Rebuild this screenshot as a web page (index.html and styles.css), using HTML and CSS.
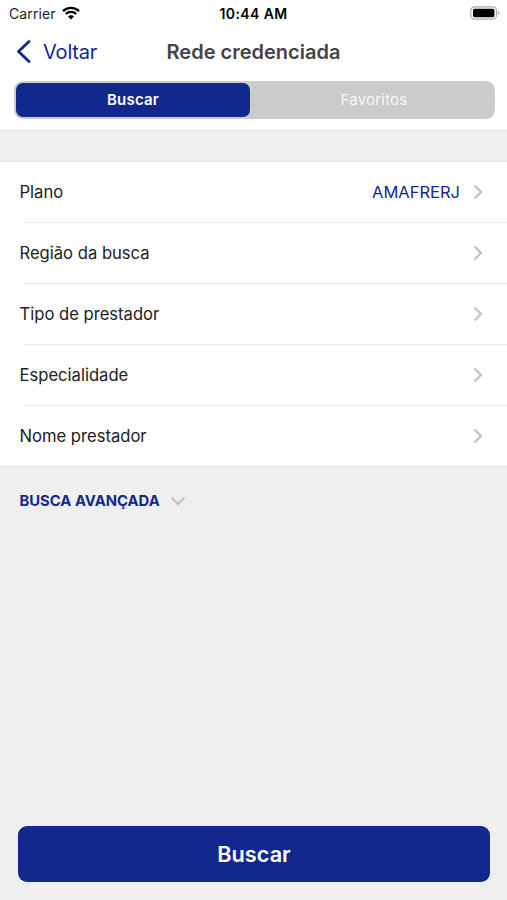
FILE: index.html
```html
<!DOCTYPE html>
<html lang="pt-BR">

<head>
    <meta charset="UTF-8">
    <meta name="viewport" content="width=device-width, initial-scale=1.0">
    <title>Rede credenciada</title>
    <link rel="stylesheet" href="styles.css">
</head>

<body>
    <div class="app">
        <header class="header">
            <div class="status">
                <div class="carrier">
                    <span>Carrier</span>
                    <svg class="wifi" width="18" height="14" viewBox="0 0 18 14">
                        <path d="M1 5.2a11.4 11.4 0 0 1 16 0" />
                        <path d="M3.8 8a7.4 7.4 0 0 1 10.4 0" />
                        <path class="dot" d="M9 13.6L6 10.6a4.2 4.2 0 0 1 6 0z" />
                    </svg>
                </div>
                <span class="time">10:44 AM</span>
                <div class="power">
                    <svg width="31" height="14" viewBox="0 0 31 14">
                        <rect class="case" x="1.8" y="0.8" width="25.6" height="12.4" rx="3.6" />
                        <rect x="4" y="2.8" width="21.4" height="8.4" rx="1.6" />
                        <path class="cap" d="M28.6 4.8q1.8.8 1.8 2.2t-1.8 2.2z" />
                    </svg>
                </div>
            </div>
            <nav class="nav">
                <a href="#" class="back">
                    <svg width="15" height="24" viewBox="0 0 15 24">
                        <path d="M13 1.5L2.5 11.5L13 21.5" />
                    </svg>
                    <span>Voltar</span>
                </a>
                <h1>Rede credenciada</h1>
            </nav>
            <div class="tabs">
                <a href="#" class="tab current">Buscar</a>
                <a href="#" class="tab">Favoritos</a>
            </div>
        </header>

        <ul class="list">
            <li>
                <span>Plano</span>
                <span class="value">AMAFRERJ</span>
                <svg class="arrow" width="10" height="16" viewBox="0 0 10 16"><path d="M1.5 1.5L8 8L1.5 14.5" /></svg>
            </li>
            <li>
                <span>Região da busca</span>
                <svg class="arrow" width="10" height="16" viewBox="0 0 10 16"><path d="M1.5 1.5L8 8L1.5 14.5" /></svg>
            </li>
            <li>
                <span>Tipo de prestador</span>
                <svg class="arrow" width="10" height="16" viewBox="0 0 10 16"><path d="M1.5 1.5L8 8L1.5 14.5" /></svg>
            </li>
            <li>
                <span>Especialidade</span>
                <svg class="arrow" width="10" height="16" viewBox="0 0 10 16"><path d="M1.5 1.5L8 8L1.5 14.5" /></svg>
            </li>
            <li>
                <span>Nome prestador</span>
                <svg class="arrow" width="10" height="16" viewBox="0 0 10 16"><path d="M1.5 1.5L8 8L1.5 14.5" /></svg>
            </li>
        </ul>

        <a href="#" class="advanced">
            <span>BUSCA AVANÇADA</span>
            <svg width="16" height="10" viewBox="0 0 16 10"><path d="M1.5 1.5L8 8L14.5 1.5" /></svg>
        </a>

        <button class="submit">Buscar</button>
    </div>
</body>

</html>
```
FILE: styles.css
```css
* {
    margin: 0;
    padding: 0;
    box-sizing: border-box;
}

body {
    font-family: Inter, "Liberation Sans", sans-serif;
    background-color: #efefef;
}

ul {
    list-style: none;
}

a {
    color: #12288c;
    text-decoration: none;
}

svg {
    display: block;
    flex: none;
}

.app {
    height: 900px;
    display: flex;
    flex-direction: column;
}

/* header */
.header {
    height: 131px;
    background-color: #fff;
    border-bottom: 1px solid #dedede;
}

.status {
    height: 26px;
    padding: 0 7px 0 9px;
    display: grid;
    grid-template-columns: 1fr auto 1fr;
    align-items: center;
    font-size: 14px;
    color: #222;
}

.carrier {
    display: flex;
    align-items: center;
    gap: 6px;
    letter-spacing: 0.1px;
}

.wifi path {
    fill: none;
    stroke: #000;
    stroke-width: 2.4;
}

.wifi .dot {
    fill: #000;
    stroke: none;
}

.time {
    margin-right: 2px;
    font-weight: 600;
    letter-spacing: 0.4px;
    color: #000;
}

.power {
    display: flex;
    justify-content: flex-end;
}

.case {
    fill: none;
    stroke: #aaa;
    stroke-width: 1.2;
}

.cap {
    fill: #aaa;
}

.nav {
    height: 52px;
    margin-bottom: 3px;
    padding: 0 16px;
    display: grid;
    grid-template-columns: 1fr auto 1fr;
    align-items: center;
}

.back {
    display: flex;
    align-items: center;
    gap: 12px;
    font-size: 20px;
    letter-spacing: -0.2px;
}

.back path {
    fill: none;
    stroke: #12288c;
    stroke-width: 2.8;
    stroke-linecap: round;
    stroke-linejoin: round;
}

.nav h1 {
    font-size: 20px;
    font-weight: 600;
    color: #444;
}

.tabs {
    height: 38px;
    margin: 0 12px 0 14px;
    padding: 2px;
    display: flex;
    background-color: #cbcbcb;
    border-radius: 9px;
}

.tab {
    flex: 1;
    padding-left: 5px;
    line-height: 34px;
    text-align: center;
    font-size: 15px;
    letter-spacing: 0.2px;
    color: #f8f8f8;
}

.tab.current {
    flex: none;
    width: 234px;
    padding-left: 0;
    background-color: #12288c;
    border-radius: 7px;
    font-weight: 600;
    color: #fff;
}

/* list */
.list {
    margin-top: 30px;
    background-color: #fff;
    border-top: 1px solid #e2e2e2;
    border-bottom: 1px solid #dedede;
}

.list li {
    position: relative;
    height: 61px;
    padding: 0 24.5px 2px 19.5px;
    display: flex;
    align-items: center;
    font-size: 16.6px;
    color: #222;
}

.list li:last-child {
    height: 60px;
    padding-bottom: 1px;
}

.list li + li::before {
    content: "";
    position: absolute;
    top: -1px;
    left: 25px;
    right: 0;
    height: 1px;
    background-color: #e9e9e9;
}

.value {
    margin-left: auto;
    font-size: 16.5px;
    color: #12288c;
}

.arrow {
    margin-left: auto;
}

.value + .arrow {
    margin-left: 12.5px;
}

.arrow path,
.advanced path {
    fill: none;
    stroke: #c3c3c3;
    stroke-width: 2.4;
}

.advanced {
    margin: 25px 19.5px 0;
    height: 18px;
    display: flex;
    align-items: center;
    gap: 10px;
    font-size: 14.8px;
    font-weight: 700;
}

/* bottom button */
.submit {
    height: 56px;
    margin: auto 17px 18px 18px;
    border: none;
    border-radius: 9px;
    background-color: #12288c;
    font-family: inherit;
    font-size: 21.7px;
    font-weight: 600;
    color: #fff;
}
```
